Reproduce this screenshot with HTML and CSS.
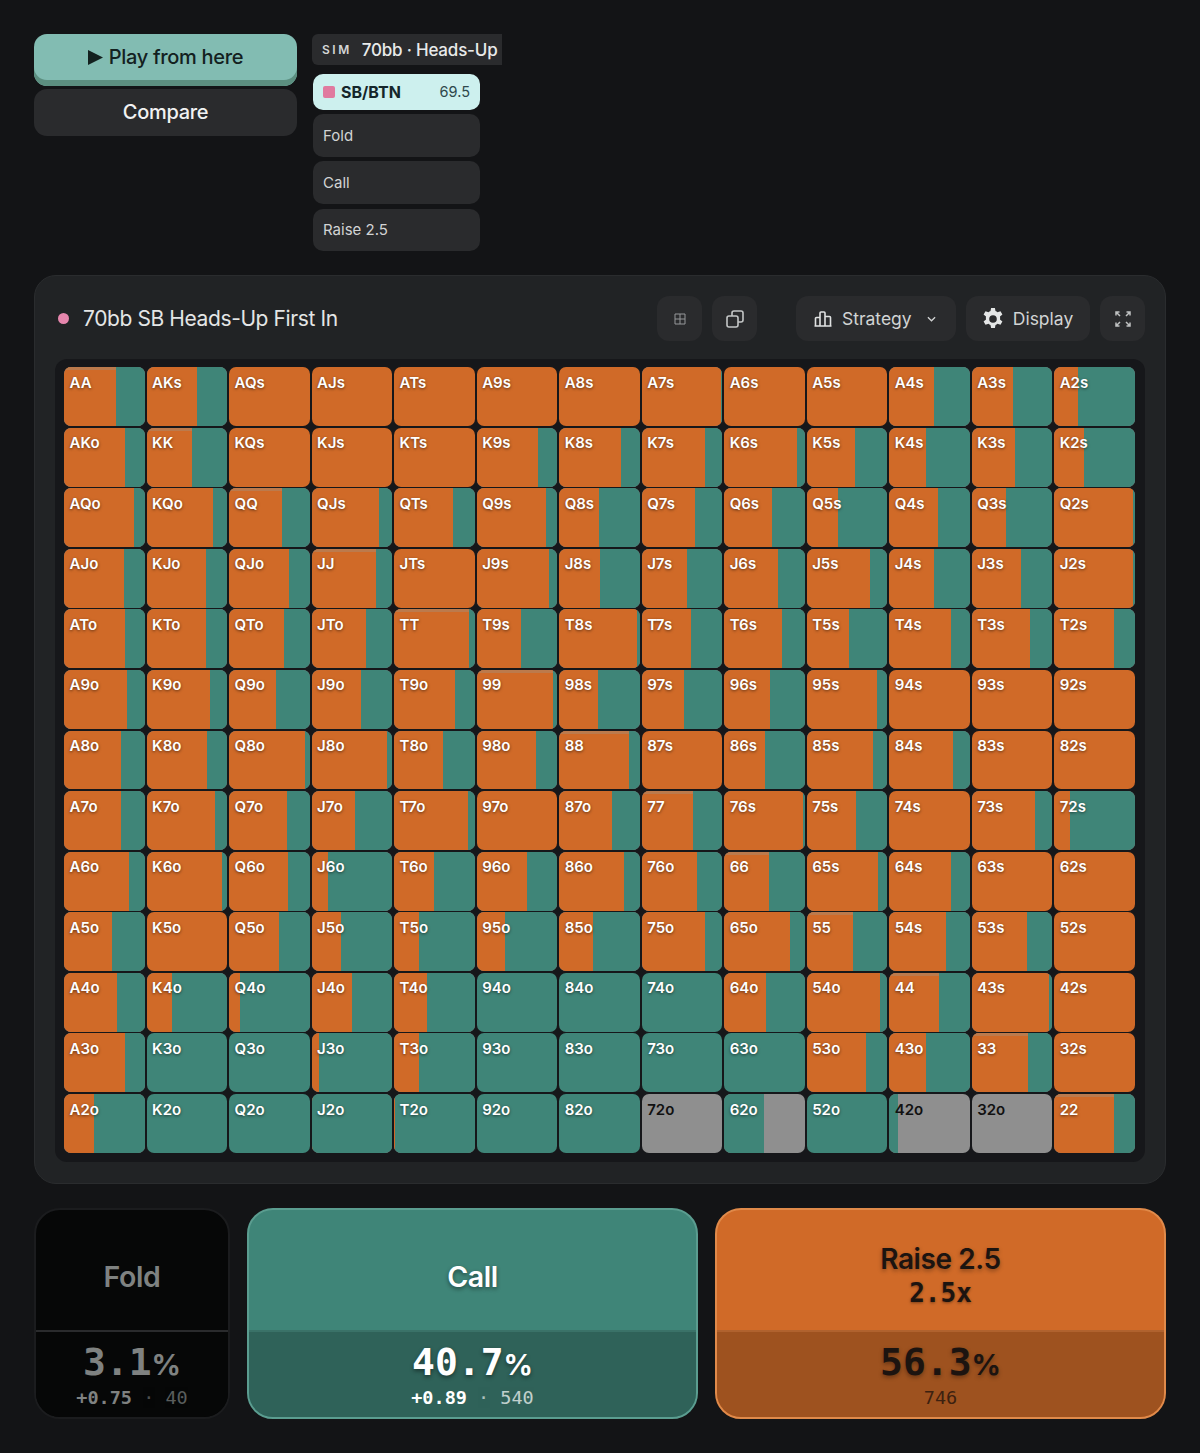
FILE: index.html
```html
<!DOCTYPE html>
<html lang="en">
<head>
    <meta charset="UTF-8">
    <meta name="viewport" content="width=device-width, initial-scale=1.0">
    <title>70bb SB Heads-Up First In</title>
    <link rel="stylesheet" href="styles.css">
</head>
<body>
    <div class="top-row">
        <div class="play-col">
            <button class="play-btn">
                <svg class="play-icon" viewBox="0 0 16 16"><path d="M0 0L16 8L0 16Z"/></svg>
                Play from here
            </button>
            <button class="compare-btn">Compare</button>
        </div>
        <div class="sim-col">
            <div class="sim-badge"><span class="sim-tag">SIM</span><span class="sim-name">70bb · Heads-Up</span></div>
            <div class="node-list">
                <div class="node active">
                    <span class="node-dot"></span>
                    <span class="node-name">SB/BTN</span>
                    <span class="node-stack">69.5</span>
                </div>
                <div class="node">Fold</div>
                <div class="node">Call</div>
                <div class="node">Raise 2.5</div>
            </div>
        </div>
    </div>

    <div class="panel">
        <div class="panel-head">
            <span class="title-dot"></span>
            <h1 class="panel-title">70bb SB Heads-Up First In</h1>
            <div class="tools">
                <button class="tool tool-square">
                    <svg class="icon-grid" viewBox="0 0 12 12"><path d="M1 1h10v10H1ZM6 1v10M1 6h10"/></svg>
                </button>
                <button class="tool tool-square">
                    <svg class="icon-copy" viewBox="0 0 18 18"><rect x="1" y="6" width="11" height="11" rx="2"/><path d="M6 6V3A2 2 0 0 1 8 1h7a2 2 0 0 1 2 2v7a2 2 0 0 1-2 2H12"/></svg>
                </button>
                <button class="tool tool-strategy">
                    <svg class="icon-bars" viewBox="0 0 18 18"><path d="M1.500 16V8.500a1 1 0 0 1 1-1h3.500M6 16V3a1 1 0 0 1 1-1h3a1 1 0 0 1 1 1v13M11 6.500h4.500a1 1 0 0 1 1 1V16M.5 16h17"/></svg>
                    <span>Strategy</span>
                    <svg class="icon-chevron" viewBox="0 0 10 6"><path d="M1 1l4 4 4-4"/></svg>
                </button>
                <button class="tool tool-display">
                    <svg class="icon-gear" viewBox="2 1 20 22"><path fill-rule="evenodd" d="M13.900 1h-3.800l-.6 3.100a8.300 8.300 0 0 0-2 1.150L4.500 4.200 2.600 7.500l2.400 2.050a8.300 8.300 0 0 0 0 2.900L2.600 14.500l1.900 3.300 3-1.050a8.300 8.300 0 0 0 2 1.150l.6 3.100h3.800l.6-3.100a8.300 8.300 0 0 0 2-1.150l3 1.050 1.900-3.300-2.400-2.050a8.300 8.300 0 0 0 0-2.900l2.400-2.050-1.900-3.300-3 1.050a8.300 8.300 0 0 0-2-1.150ZM12 8.200a3.800 3.800 0 1 1 0 7.600 3.800 3.800 0 0 1 0-7.600Z"/></svg>
                    <span>Display</span>
                </button>
                <button class="tool tool-square tool-full">
                    <svg class="icon-full" viewBox="0 0 16 16"><path d="M1 4.500V1h3.500M1 1l4 4M11.500 1H15v3.500M15 1l-4 4M1 11.500V15h3.500M1 15l4-4M15 11.500V15h-3.500M15 15l-4-4"/></svg>
                </button>
            </div>
        </div>
        <div class="range-grid" id="rangeGrid"></div>
    </div>

    <div class="actions">
        <div class="action action-fold">
            <div class="action-top"><div class="action-name">Fold</div></div>
            <div class="action-bottom">
                <div class="action-pct">3.1<span class="pct-sign">%</span></div>
                <div class="action-sub"><b>+0.75</b> <i>·</i> <em>40</em></div>
            </div>
        </div>
        <div class="action action-call">
            <div class="action-top"><div class="action-name">Call</div></div>
            <div class="action-bottom">
                <div class="action-pct">40.7<span class="pct-sign">%</span></div>
                <div class="action-sub"><b>+0.89</b> <i>·</i> <em>540</em></div>
            </div>
        </div>
        <div class="action action-raise">
            <div class="action-top">
                <div class="action-name">Raise 2.5</div>
                <div class="action-size">2.5x</div>
            </div>
            <div class="action-bottom">
                <div class="action-pct">56.3<span class="pct-sign">%</span></div>
                <div class="action-sub"><em>746</em></div>
            </div>
        </div>
    </div>

    <script src="script.js"></script>
</body>
</html>
```
FILE: styles.css
```css
* {
    box-sizing: border-box;
}
body {
    margin: 0;
    padding: 34px 34px 0;
    height: 1453px;
    overflow: hidden;
    font-family: Inter, "Noto Sans", sans-serif;
    background-color: #131416;
    color: #fff;
}
button {
    font-family: inherit;
    border: none;
    padding: 0;
}

/* top row */
.top-row {
    display: flex;
    gap: 15px;
    height: 241px;
}
.play-col {
    width: 263px;
    display: flex;
    flex-direction: column;
    gap: 3px;
}
.play-btn {
    height: 52px;
    padding-bottom: 6px;
    background: #82bcb2;
    border-radius: 13px;
    box-shadow: inset 0 -6px 0 #5c8f80;
    color: #13211f;
    font-size: 20px;
    font-weight: 500;
    letter-spacing: -0.3px;
    display: flex;
    align-items: center;
    justify-content: center;
    gap: 6px;
}
.play-icon {
    width: 15px;
    height: 17px;
    fill: #13211f;
}
.compare-btn {
    height: 47px;
    padding-bottom: 2px;
    background: #2a2b2d;
    border-radius: 13px;
    color: #f1f2f2;
    font-size: 20px;
    font-weight: 500;
    letter-spacing: -0.3px;
}
.sim-col {
    display: flex;
    flex-direction: column;
    gap: 8.5px;
    align-items: flex-start;
}
.sim-badge {
    width: 190px;
    height: 31px;
    background: #2a2b2d;
    border-radius: 6px 0 0 6px;
    padding-left: 10px;
    display: flex;
    align-items: center;
    gap: 10px;
    white-space: nowrap;
}
.sim-tag {
    font-size: 12px;
    font-weight: 600;
    letter-spacing: 2.5px;
    color: #d4d6d6;
}
.sim-name {
    font-size: 17px;
    font-weight: 500;
    letter-spacing: -0.2px;
    color: #e8eaea;
}
.node-list {
    margin-left: 1px;
    width: 167px;
    display: flex;
    flex-direction: column;
    gap: 4.4px;
}
.node {
    height: 42.7px;
    background: #2a2b2d;
    border-radius: 10px;
    padding: 0 10px;
    display: flex;
    align-items: center;
    font-size: 15px;
    color: #d2d4d4;
}
.node.active {
    height: 36.5px;
    background: #cdf0ee;
    color: #14262a;
}
.node-dot {
    width: 12px;
    height: 12px;
    background: #e07a9f;
    border-radius: 2px;
    margin-right: 6px;
}
.node-name {
    font-size: 16px;
    font-weight: 700;
}
.node-stack {
    margin-left: auto;
    font-size: 14.5px;
    color: #2f494c;
}

/* range panel */
.panel {
    height: 909px;
    background: #212325;
    border: 1px solid #2a2c2e;
    border-radius: 22px;
    padding: 20px 20px 21px;
}
.panel-head {
    display: flex;
    align-items: center;
    height: 45px;
    padding-left: 3px;
    margin-bottom: 18px;
}
.title-dot {
    width: 11px;
    height: 11px;
    border-radius: 50%;
    background: #e686ad;
    margin-right: 14px;
}
.panel-title {
    margin: 0;
    font-size: 21px;
    font-weight: 400;
    letter-spacing: -0.4px;
    color: #e4e6e6;
}
.tools {
    margin-left: auto;
    display: flex;
    gap: 10px;
}
.tool {
    height: 45px;
    background: #2a2b2d;
    border-radius: 12px;
    color: #d2d4d4;
    font-size: 17.5px;
    display: flex;
    align-items: center;
    justify-content: center;
}
.tool-square {
    width: 45px;
}
.tool-strategy {
    width: 160px;
    margin-left: 29px;
    padding-left: 18px;
    gap: 10px;
    justify-content: flex-start;
}
.tool-display {
    width: 124px;
    gap: 10px;
}
.tool svg {
    fill: none;
    stroke: currentColor;
}
.icon-grid {
    width: 12px;
    height: 12px;
    stroke-width: 1;
    color: #95989a;
}
.icon-copy {
    width: 18px;
    height: 18px;
    stroke-width: 1.6;
    color: #c4c6c6;
}
.icon-bars {
    width: 18px;
    height: 18px;
    stroke-width: 1.6;
    color: #e0e2e2;
}
.icon-chevron {
    width: 9px;
    height: 6px;
    stroke-width: 1.4;
    margin-left: 5px;
}
.tool .icon-gear {
    width: 20px;
    height: 22px;
    fill: #e4e6e6;
    stroke: none;
}
.icon-full {
    width: 16px;
    height: 16px;
    stroke-width: 1.5;
    color: #c0c2c2;
}

/* 13 x 13 hand grid */
.range-grid {
    height: 803px;
    background: #16171a;
    border-radius: 12px;
    padding: 8px 10px 9px 9px;
    display: grid;
    grid-template-columns: repeat(13, 1fr);
    grid-template-rows: repeat(13, 1fr);
    gap: 1.6px;
}
.cell {
    position: relative;
    display: flex;
    border-radius: 7px;
    overflow: hidden;
    background: #8f8f8f;
}
.seg-raise {
    background: #d06a28;
}
.seg-call {
    background: #3f8578;
}
.pair .seg-raise {
    border-top: 3px solid #bc7a4c;
}
.cell-label {
    position: absolute;
    top: 6.5px;
    left: 5.6px;
    font-size: 15px;
    font-weight: 600;
    line-height: 18px;
    color: #fff;
    text-shadow: 0 1px 3px rgba(0, 0, 0, 0.55);
}
.cell.fold .cell-label {
    color: #111;
    text-shadow: none;
}

/* action cards */
.actions {
    margin-top: 24px;
    display: grid;
    grid-template-columns: 196px 1fr 1fr;
    gap: 17px;
    height: 211px;
}
.action {
    display: flex;
    flex-direction: column;
    border: 2px solid;
    border-radius: 26px;
    overflow: hidden;
    text-align: center;
}
.action-top {
    height: 120px;
    padding-top: 13px;
    display: flex;
    flex-direction: column;
    align-items: center;
    justify-content: center;
}
.action-bottom {
    flex: 1;
    padding-top: 8px;
    border-top: 2px solid;
}
.action-name {
    font-size: 28.5px;
    font-weight: 600;
    letter-spacing: -0.4px;
    line-height: 33px;
}
.action-size {
    font-family: "DejaVu Sans Mono", monospace;
    font-size: 26px;
    font-weight: 700;
    line-height: 33px;
    margin-top: 1px;
    text-shadow: 0 1px 3px rgba(0, 0, 0, 0.4);
}
.action-pct {
    font-family: "DejaVu Sans Mono", monospace;
    font-size: 38px;
    font-weight: 700;
    line-height: 44px;
}
.pct-sign {
    font-family: Inter, sans-serif;
    font-size: 29px;
    font-weight: 700;
}
.action-sub {
    font-family: "DejaVu Sans Mono", monospace;
    font-size: 18.5px;
    line-height: 24px;
    margin-top: -1px;
    white-space: nowrap;
}
.action-sub b {
    font-weight: 700;
}
.action-sub i {
    font-style: normal;
    opacity: 0.6;
}
.action-sub em {
    font-style: normal;
    opacity: 0.7;
}
.action-fold {
    background: #060707;
    border-color: #1b1c1e;
    color: #7f8281;
}
.action-fold .action-bottom {
    background: #060707;
    border-top-color: #2a2b2d;
}
.action-call {
    background: #3f8578;
    border-color: #5b9d90;
    color: #fff;
}
.action-call .action-bottom {
    background: #2f6259;
    border-top-color: #3a7268;
}
.action-call .action-name,
.action-call .action-pct {
    text-shadow: 0 2px 4px rgba(0, 0, 0, 0.45);
}
.action-raise {
    background: #d06a28;
    border-color: #e08a4a;
    color: #1c1410;
}
.action-raise .action-bottom {
    background: #9e521f;
    border-top-color: #b0622e;
}
.action-raise .action-name {
    font-size: 28px;
}
.action-raise .action-name,
.action-raise .action-pct {
    text-shadow: 0 2px 4px rgba(0, 0, 0, 0.35);
}
.action-raise .action-sub em {
    color: #3c2110;
    opacity: 1;
}
```
FILE: script.js
```js
// hand grid, row by row: [raise %, call %], the rest is fold
const ranks = "AKQJT98765432".split("");

const raise = [
    [64, 63, 100, 100, 100, 100, 100, 98, 100, 100, 56, 51, 30],
    [76, 56, 100, 100, 100, 76, 76, 78, 90, 60, 46, 54, 37],
    [86, 82, 65, 83, 73, 86, 49, 66, 59, 39, 60, 43, 98],
    [74, 73, 74, 80, 100, 90, 51, 56, 67, 79, 55, 61, 98],
    [75, 74, 68, 67, 93, 55, 96, 61, 71, 53, 76, 72, 74],
    [78, 79, 58, 61, 75, 95, 48, 53, 57, 87, 100, 100, 100],
    [71, 75, 94, 93, 61, 74, 87, 100, 50, 82, 79, 100, 100],
    [71, 85, 72, 54, 91, 100, 65, 64, 97, 61, 100, 78, 20],
    [80, 93, 73, 20, 50, 62, 80, 69, 55, 88, 76, 100, 100],
    [59, 100, 62, 36, 31, 35, 42, 78, 82, 57, 70, 68, 100],
    [65, 31, 13, 50, 41, 0, 0, 0, 52, 91, 62, 96, 100],
    [75, 0, 0, 9, 31, 0, 0, 0, 0, 74, 46, 70, 100],
    [37, 0, 0, 1, 1, 0, 0, 0, 0, 0, 0, 0, 74]
];

// only the bottom row has hands that fold
const callOverride = { "72o": 0, "62o": 49, "42o": 11, "32o": 0 };

const grid = document.getElementById("rangeGrid");

ranks.forEach((rowRank, r) => {
    ranks.forEach((colRank, c) => {
        let name = r < c ? rowRank + colRank + "s" : colRank + rowRank + "o";
        if (r === c) name = rowRank + rowRank;

        const raisePct = raise[r][c];
        const callPct = name in callOverride ? callOverride[name] : 100 - raisePct;

        const cell = document.createElement("div");
        cell.className = "cell";
        if (r === c) cell.classList.add("pair");
        if (raisePct + callPct < 100 && callPct < 20) cell.classList.add("fold");

        if (raisePct > 0) {
            const seg = document.createElement("div");
            seg.className = "seg-raise";
            seg.style.width = raisePct + "%";
            cell.appendChild(seg);
        }
        if (callPct > 0) {
            const seg = document.createElement("div");
            seg.className = "seg-call";
            seg.style.width = callPct + "%";
            cell.appendChild(seg);
        }

        const label = document.createElement("span");
        label.className = "cell-label";
        label.textContent = name;
        cell.appendChild(label);

        grid.appendChild(cell);
    });
});
```
